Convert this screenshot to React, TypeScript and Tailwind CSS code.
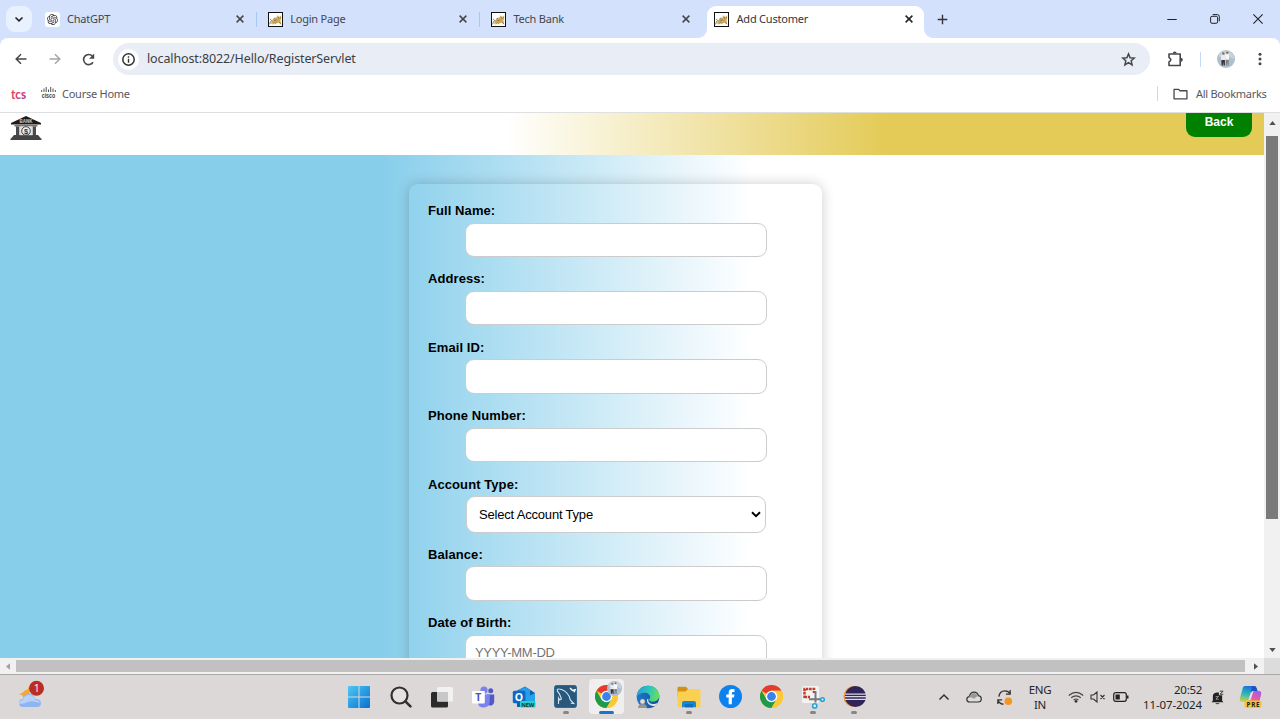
import React from "react";
import { RiOpenaiFill } from "react-icons/ri";

const CloseX = ({ dark = false }: { dark?: boolean }) => (
  <svg viewBox="0 0 10 10" className="h-[10px] w-[10px] shrink-0">
    <path d="M1.6 1.6 8.4 8.4M8.4 1.6 1.6 8.4" stroke={dark ? "#222" : "#45474b"} strokeWidth="1.5" fill="none" />
  </svg>
);

const TomcatIcon = () => (
  <svg viewBox="0 0 15 15" className="h-[15px] w-[15px] shrink-0">
    <rect x=".5" y=".5" width="14" height="14" fill="#fff" stroke="#111" />
    <path d="M3 11.800 3.800 8.600 5.800 6.700l2.400-.5L9.300 3.200l1.200 1.400 1.400.1 1.300-1.500v3.200l-.8 1.800.8 3.700-2-1.400-2.200.7L7 12.600l-.3-1.800-2.300.9Z" fill="#cda956" />
    <path d="M1.700 12.400Q2 9.500 3.600 8.400L1.900 6.800M5 12.300l2-2M11 10.400l2.200 1.800M10 5.800l1 .3M12 5.900l.7-.2M6.500 8.500l2-.6M5.500 6.800l2-.9" stroke="#6b5c45" strokeWidth=".8" fill="none" />
  </svg>
);

const ChatIcon = () => (
  <span className="flex h-[15px] w-[15px] shrink-0 items-center justify-center rounded-[3px] bg-white text-[#333]">
    <RiOpenaiFill size={13} />
  </span>
);

const ArrowIcon = ({ className }: { className: string }) => (
  <svg viewBox="0 0 12 12" className={className}>
    <path d="M11.500 6H1.500M6 1.200 1.200 6 6 10.800" fill="none" stroke="currentColor" strokeWidth="1.500" />
  </svg>
);

const ReloadIcon = () => (
  <svg viewBox="0 0 13 13" className="h-[13px] w-[13px]">
    <path d="M11 9.300A5.100 5.100 0 1 1 10.400 3" fill="none" stroke="currentColor" strokeWidth="1.600" />
    <path d="M12.200.6v5.100H7.100Z" fill="currentColor" />
  </svg>
);

const InfoIcon = () => (
  <svg viewBox="0 0 13 13" className="h-[13px] w-[13px]">
    <circle cx="6.500" cy="6.500" r="5.700" fill="none" stroke="currentColor" strokeWidth="1.500" />
    <path d="M5.800 5.700h1.400v4H5.800ZM5.800 3.200h1.400v1.500H5.800Z" fill="currentColor" />
  </svg>
);

const StarIcon = () => (
  <svg viewBox="0 0 15 15" className="h-[15px] w-[15px]">
    <path d="m7.500 1.900 1.600 3.800 4.200.4-3.100 2.700.9 4.100-3.600-2.200-3.600 2.200.9-4.100L1.700 6.100l4.200-.4Z" fill="none" stroke="currentColor" strokeWidth="1.500" />
  </svg>
);

function Tab({ title, icon, separator = false }: { title: string; icon: React.ReactNode; separator?: boolean }) {
  return (
    <div className="flex h-[38px] w-[223.2px] shrink-0 items-center">
      <div className="flex flex-1 items-center pl-[11px] pr-[11px]">
        {icon}
        <span className="flex-1 pl-[7px] pt-[1px] text-[11px] tracking-[-0.22px] text-[#44474c]">{title}</span>
        <CloseX />
      </div>
      <span className={separator ? "h-[15px] w-[1.5px] bg-[#a8c7fa]" : "h-[15px] w-[1.5px]"} />
    </div>
  );
}

function TabStrip() {
  return (
    <header className="flex h-[38px] shrink-0 bg-[#d3e1fd]">
      <div className="flex w-[34px] shrink-0 items-center pl-[6px]">
        <div className="flex h-[26px] w-[26px] items-center justify-center rounded-[9px] bg-[#eaf1fe]">
          <svg viewBox="0 0 10 7" className="h-[7px] w-[10px]"><path d="m1.5 1.5 3.5 3.3 3.5-3.3" fill="none" stroke="#222" strokeWidth="1.6" /></svg>
        </div>
      </div>
      <Tab title="ChatGPT" icon={<ChatIcon />} separator />
      <Tab title="Login Page" icon={<TomcatIcon />} separator />
      <Tab title="Tech Bank" icon={<TomcatIcon />} />
      <div className="flex w-[222px] shrink-0 items-end">
        <span className="-ml-[6px] h-[9px] w-[9px] shrink-0 bg-white"><span className="block h-full w-full rounded-br-[9px] bg-[#d3e1fd]" /></span>
        <div className="flex h-[32px] w-[217px] shrink-0 items-center rounded-t-[9px] bg-white pl-[7px] pr-[10px] pb-[6px]">
          <TomcatIcon />
          <span className="flex-1 pl-[8px] pt-[1px] text-[11px] tracking-[-0.22px] text-[#33363b]">Add Customer</span>
          <CloseX dark />
        </div>
        <span className="h-[9px] w-[9px] shrink-0 bg-white"><span className="block h-full w-full rounded-bl-[9px] bg-[#d3e1fd]" /></span>
      </div>
      <div className="flex flex-1 items-center justify-between pl-[11px] pr-[1px]">
        <svg viewBox="0 0 11 11" className="h-[11px] w-[11px]"><path d="M5.5.7v9.6M.7 5.5h9.6" stroke="#333" strokeWidth="1.4" /></svg>
        <div className="flex">
          <span className="flex w-[43px] items-center justify-center"><svg viewBox="0 0 10 10" className="h-[10px] w-[10px]"><path d="M.3 5.5h9.400" stroke="#222" /></svg></span>
          <span className="flex w-[43px] items-center justify-center"><svg viewBox="0 0 10 10" className="h-[10px] w-[10px]" fill="none" stroke="#222"><rect x=".6" y="2.3" width="7" height="7" rx="1.4" /><path d="M2.7.6h4.600a2 2 0 0 1 2 2v4.700" /></svg></span>
          <span className="flex w-[43px] items-center justify-center"><svg viewBox="0 0 10 10" className="h-[10px] w-[10px]"><path d="m.4.4 9.2 9.2M9.6.4.4 9.6" stroke="#222" strokeWidth="1.1" /></svg></span>
        </div>
      </div>
    </header>
  );
}

const Avatar = ({ className }: { className: string }) => (
  <svg viewBox="0 0 18 18" className={className}>
    <circle cx="9" cy="9" r="9" fill="#afbfcc" />
    <path d="M2 4Q6 0 12 1q5 3 5 8-4-2-7-3T2 7Z" fill="#c8d4dc" />
    <circle cx="6.3" cy="3.4" r="1.2" fill="#8a6a60" /><circle cx="10.3" cy="2.6" r="1.2" fill="#8a6a60" />
    <path d="M4 5.2h4.4v5H4Z" fill="#f6e8e6" /><path d="M8.2 4.2H12v5.6H8.600Z" fill="#f7fafb" />
    <path d="M4.4 10h3.5v5.5H6.600V12l-.8 3.400H4.600Z" fill="#33333b" /><path d="M9 9.700h2.800l-.2 6-1-.1-.2-3.600-.5 3.500H9Z" fill="#7f8184" />
  </svg>
);

function Toolbar() {
  return (
    <div className="flex h-[42px] shrink-0 items-center rounded-t-[8px] bg-white text-[#45474a]">
      <span className="flex w-[41px] justify-center"><ArrowIcon className="h-[12px] w-[12px]" /></span>
      <span className="flex w-[27px] justify-center text-[#a4a6a9]"><ArrowIcon className="h-[12px] w-[12px] rotate-180" /></span>
      <span className="flex w-[40px] justify-center"><ReloadIcon /></span>
      <div className="ml-[5px] flex h-[32px] w-[1037px] items-center rounded-full bg-[#e9edf6] pl-[5px] pr-[14px]">
        <span className="flex h-[21px] w-[21px] items-center justify-center rounded-full bg-white text-[#303234]"><InfoIcon /></span>
        <span className="flex-1 pl-[8px] pt-[1px] text-[12.5px] tracking-[-0.12px] text-[#3b3e43]">localhost:8022/Hello/RegisterServlet</span>
        <StarIcon />
      </div>
      <span className="flex w-[50px] justify-center">
        <svg viewBox="0 0 17 17" className="h-[17px] w-[17px]">
          <path d="M2 3h11.200v11.500H2V11Q5.600 9 2 6.400Z" fill="none" stroke="#45474a" strokeWidth="1.600" strokeLinejoin="round" />
          <path d="M5.700 2.500a2 2 0 0 1 4 0ZM13.800 6.800a2 2 0 0 1 0 4Z" fill="#45474a" />
        </svg>
      </span>
      <span className="h-[15px] w-px bg-[#c5d9fb]" />
      <span className="flex w-[49px] justify-center"><Avatar className="h-[18px] w-[18px]" /></span>
      <span className="flex w-[19px] justify-center">
        <svg viewBox="0 0 4 14" className="h-[14px] w-[4px]"><circle cx="2" cy="2.300" r="1.500" fill="currentColor" /><circle cx="2" cy="7" r="1.500" fill="currentColor" /><circle cx="2" cy="11.700" r="1.500" fill="currentColor" /></svg>
      </span>
    </div>
  );
}

function Bookmarks() {
  return (
    <div className="flex h-[33px] shrink-0 items-center border-b border-[#dedfe1] bg-white pb-[5px] text-[11px] text-[#55585d]">
      <svg viewBox="0 0 31 15" className="h-[15px] w-[31px] ml-[10px]">
        <defs><linearGradient id="tcs" x1="0" x2="1" y1="0" y2="1"><stop stopColor="#e8553e" /><stop offset=".5" stopColor="#d83a6c" /><stop offset="1" stopColor="#9a3fa8" /></linearGradient></defs>
        <text x="1" y="12.500" fontFamily="Lato" fontWeight="700" fontSize="13" textLength="15" lengthAdjust="spacingAndGlyphs" fill="url(#tcs)">tcs</text>
      </svg>
      <svg viewBox="0 0 15 14" className="h-[14px] w-[15px]">
        <path d="M.7 3v2M3 1.500V5M5.200 0v5M7.500 2.500V5M9.700 0v5M12 1.500V5M14.300 3v2" stroke="#53565a" />
        <text x=".7" y="10.800" textLength="13.600" lengthAdjust="spacingAndGlyphs" fontFamily="Liberation Sans" fontSize="6.500" fontWeight="700" fill="#444">cisco</text>
      </svg>
      <span className="flex-1 pl-[6px] pt-[1px] tracking-[-0.250px]">Course Home</span>
      <span className="h-[15px] w-px bg-[#c5d9fb]" />
      <svg viewBox="0 0 16 13" className="ml-[15px] h-[12px] w-[15px]"><path d="M1 1.500h5L7.500 3H15v8.700H1Z" fill="none" stroke="#45474a" strokeWidth="1.400" strokeLinejoin="round" /></svg>
      <span className="ml-[8px] mr-[13px] w-[71px] whitespace-nowrap pt-[1px] tracking-[-0.270px]">All Bookmarks</span>
    </div>
  );
}

const BankLogo = () => (
  <svg viewBox="0 0 32 25" className="h-[25px] w-[32px]">
    <path d="M16 0 31 7v1.500H1V7Z" fill="#1c1c1c" />
    <path d="M4.500 9.200h23v1.300h-23Z" fill="#555" />
    <path d="M6 10.500h3.500v8.500H6ZM22.500 10.500H26v8.500h-3.500Z" fill="#4b4b4b" />
    <path d="M4 19h24l3 3.500H1ZM.5 22.500h31V24H.500Z" fill="#444" />
    <rect x="9.500" y="10.500" width="13" height="8.700" fill="#e0e0e0" />
    <circle cx="16" cy="15" r="4.300" fill="#eee" stroke="#444" strokeWidth="1" />
    <text x="16" y="17.700" textAnchor="middle" fontSize="7.500" fontWeight="700" fontFamily="Liberation Sans" fill="#333">$</text>
    <text x="16" y="6.700" textAnchor="middle" fontSize="4.500" fontWeight="700" fontFamily="Liberation Sans" fill="#ccc">BANK</text>
  </svg>
);

function Field({ label, placeholder }: { label: string; placeholder?: string }) {
  return (
    <div className="h-[68.400px] shrink-0">
      <label className="block h-[21.700px] text-[13px] font-bold leading-[19px] tracking-[0.080px]">{label}</label>
      <input placeholder={placeholder} className="ml-[37px] block h-[34.400px] w-[302px] rounded-[9px] border border-[#ccc] bg-white px-[9px] text-[13px] tracking-[-0.300px] outline-none placeholder:text-[#757575]" />
    </div>
  );
}

function Page() {
  return (
    <main className="flex h-[545px] shrink-0 font-['Liberation_Sans',sans-serif] text-black">
      <div className="flex h-full w-[1264px] flex-col overflow-hidden">
        <div className="flex h-[42px] shrink-0 items-start justify-between bg-[linear-gradient(to_right,white_40%,#e4cb58_70%)] pl-[10px] pr-[12px]">
          <div className="pt-[3px]"><BankLogo /></div>
          <button className="h-[24px] w-[66px] rounded-b-[9px] bg-[#008000] pb-[5px] text-[12px] font-bold leading-[17px] text-white">Back</button>
        </div>
        <div className="flex flex-1 items-start bg-[linear-gradient(to_right,#87ceeb_30%,white_59.500%)] pl-[409px] pt-[29px]">
          <form className="flex h-[620px] w-[413px] shrink-0 flex-col rounded-[9px] pl-[19px] pt-[17px] shadow-[0_0_13px_rgba(0,0,0,0.2)]">
            <Field label="Full Name:" />
            <Field label="Address:" />
            <Field label="Email ID:" />
            <Field label="Phone Number:" />
            <div className="h-[70.200px] shrink-0">
              <label className="block h-[21.700px] text-[13px] font-bold leading-[19px] tracking-[0.080px]">Account Type:</label>
              <div className="ml-[38px] flex h-[36.500px] w-[300px] items-center justify-between rounded-[9px] border border-[#ccc] bg-white pl-[12px] pr-[4px] text-[13px]">
                <span className="pt-px tracking-[-0.190px]">Select Account Type</span>
                <svg viewBox="0 0 10 7" className="h-[7px] w-[10px]"><path d="m1 1.300 4 3.800 4-3.800" fill="none" stroke="#000" strokeWidth="2" /></svg>
              </div>
            </div>
            <Field label="Balance:" />
            <Field label="Date of Birth:" placeholder="YYYY-MM-DD" />
          </form>
        </div>
      </div>
      <div className="flex w-[16px] flex-col items-center bg-[#f1f1f1]">
        <span className="flex h-[22px] items-center pb-[3px]"><svg viewBox="0 0 8 5" className="h-[4px] w-[7px]"><path d="M4 0 8 5H0Z" fill="#505050" /></svg></span>
        <span className="mt-px h-[383px] w-[12px] bg-[#7a7a7a]" />
        <span className="flex-1" />
        <span className="flex h-[17px] items-center"><svg viewBox="0 0 8 5" className="h-[4px] w-[7px]"><path d="M0 0h8L4 5Z" fill="#505050" /></svg></span>
      </div>
    </main>
  );
}

function HorizontalScroll() {
  return (
    <div className="flex h-[16px] shrink-0 items-center bg-[#f1f1f1]">
      <span className="flex w-[16px] justify-center"><svg viewBox="0 0 5 8" className="h-[7px] w-[4px]"><path d="M5 0v8L0 4Z" fill="#a0a0a0" /></svg></span>
      <span className="h-[12px] w-[1229px] bg-[#c1c1c1]" />
      <span className="flex w-[19px] justify-center pl-[3px]"><svg viewBox="0 0 5 8" className="h-[7px] w-[4px]"><path d="m0 0 5 4-5 4Z" fill="#505050" /></svg></span>
      <span className="h-full flex-1 bg-[#dcdcdc]" />
    </div>
  );
}

const ChromeLogo = ({ className }: { className: string }) => (
  <svg viewBox="0 0 24 24" className={className}>
    <circle cx="12" cy="12" r="12" fill="#fcc934" />
    <path d="M12 12 1.600 6A12 12 0 0 1 22.400 6H12Z" fill="#e33b2e" />
    <path d="M1.600 6A12 12 0 0 0 12 24l5.200-9L12 12 6.800 15Z" fill="#1e9a48" />
    <path d="M12 6h10.400A12 12 0 0 1 12 24l5.200-9Z" fill="#fcc934" />
    <circle cx="12" cy="12" r="6" fill="#fff" /><circle cx="12" cy="12" r="4.600" fill="#3b82ee" />
  </svg>
);

const WindowsLogo = () => (
  <svg viewBox="0 0 22 22" className="h-[22px] w-[22px]">
    <defs><linearGradient id="win" gradientUnits="userSpaceOnUse" x1="0" y1="0" x2="22" y2="22"><stop stopColor="#4cc8f4" /><stop offset="1" stopColor="#0870d0" /></linearGradient></defs>
    <path d="M0 1q0-1 1-1h9.500v10.500H0ZM11.500 0H21q1 0 1 1v9.500H11.500ZM0 11.500h10.500V22H1q-1 0-1-1ZM11.500 11.500H22V21q0 1-1 1h-9.500Z" fill="url(#win)" />
  </svg>
);

const SearchIcon = () => (
  <svg viewBox="0 0 22 22" className="h-[22px] w-[22px]"><circle cx="9.500" cy="9.500" r="8" fill="#e8e5e4" fillOpacity=".7" stroke="#303030" strokeWidth="2.200" /><path d="m15.400 15.400 5 5" stroke="#303030" strokeWidth="2.600" strokeLinecap="round" /></svg>
);

const TaskViewIcon = () => (
  <svg viewBox="0 0 24 22" className="h-[22px] w-[24px]"><rect x="1" y="6" width="17" height="15.500" rx="1.500" fill="#2b2b2b" /><rect x="7" y="1" width="16" height="14.500" rx="1.500" fill="#f2f2f2" /><path d="M7 6h11v9.500H7Z" fill="#c8c8c8" /></svg>
);

const TeamsIcon = () => (
  <svg viewBox="0 0 24 22" className="h-[22px] w-[24px]">
    <circle cx="19.700" cy="4.700" r="2.500" fill="#5058c5" /><circle cx="13" cy="4.200" r="3.600" fill="#7b83eb" />
    <path d="M16 8.500h7.200v6.700q-.3 4.500-4.500 4.400L16 19Z" fill="#5059c9" /><path d="M8 8.500h10.800V15q-.5 6.500-6 6.500T7 17Z" fill="#7b83eb" />
    <rect x="1" y="5" width="12.800" height="12.600" rx="1" fill="#fff" /><text x="7.400" y="15" textAnchor="middle" fontSize="10.500" fontWeight="700" fontFamily="Open Sans" fill="#4b53bc">T</text>
  </svg>
);

const OutlookIcon = () => (
  <svg viewBox="0 0 24 22" className="h-[22px] w-[24px]">
    <path d="M4.500 5 13 .6 23 7v12q0 2-2 2H5Z" fill="#0b5fb5" /><path d="m7 4 6-3.300 5 3v8H8Z" fill="#279de8" /><path d="m13 12 10-5v12q0 2-2 2H8Z" fill="#23a4e5" />
    <rect x=".8" y="4.800" width="12.600" height="12.500" rx="1.500" fill="#0b69c7" /><text x="7" y="15" textAnchor="middle" fontSize="10.500" fontWeight="700" fontFamily="Open Sans" fill="#fff">O</text>
    <rect x="8" y="15" width="15.500" height="6.600" rx="1" fill="#25d0d2" /><text x="15.800" y="20.700" textAnchor="middle" fontSize="5.800" fontWeight="700" fontFamily="Open Sans" textLength="13" fill="#12383b">NEW</text>
  </svg>
);

const WorkbenchIcon = () => (
  <svg viewBox="0 0 23 23" className="h-[23px] w-[23px]">
    <rect x=".5" y=".5" width="22" height="22" rx="2" fill="#28597d" stroke="#34698d" />
    <path d="M4.500 19V13l1.200 2 1.700-1Q5.500 8 3.500 6.500 2.500 3.500 5.300 4q6 .5 10 7.500l1 3.500 3.500 3.500-3-.3" fill="none" stroke="#d5e5ee" strokeWidth="1.100" />
    <path d="m16 3 2.500 2.500 2.500-.7-1 2.400" fill="none" stroke="#fff" strokeWidth="1.500" />
  </svg>
);

const EdgeIcon = () => (
  <svg viewBox="0 0 24 24" className="h-[24px] w-[24px]">
    <defs>
      <linearGradient id="edgeTop" x1="0" x2="1" y1="0" y2=".2"><stop stopColor="#249bd4" /><stop offset=".6" stopColor="#30c6b9" /><stop offset="1" stopColor="#65dc63" /></linearGradient>
      <linearGradient id="edgeLow" x1="0" x2="1"><stop stopColor="#1b78c9" /><stop offset="1" stopColor="#114f99" /></linearGradient>
    </defs>
    <circle cx="12" cy="12" r="11.300" fill="url(#edgeLow)" />
    <path d="M.8 10C2 4 6.500.700 12 .700c7 0 11.300 5 11.300 9.800 0 3.800-2.800 6-6.200 6-2.500 0-4-.8-4-1.800 0-.6 1-1.100 1-2.700 0-2.400-2.300-4.300-5.300-4.300C5.500 7.700 2.200 9 .8 12Z" fill="url(#edgeTop)" />
    <path d="M12.500 13.500c-1 3 1 5.300 4 5.500 2 .1 4-.6 5.200-1.300-.5 1-1.500 2.300-2.700 3.200-5 .2-8.400-2.500-8-6.500Z" fill="#e2e2e2" />
    <circle cx="6.500" cy="16.500" r="2.500" fill="#e0ddda" stroke="#888" strokeWidth=".5" /><path d="M2 23q0-4 4.500-4t4.500 4Z" fill="#959595" />
  </svg>
);

const FolderIcon = () => (
  <svg viewBox="0 0 24 22" className="h-[22px] w-[24px]"><path d="M.5 2Q.5.700 2 .700h7L11 3v8H.500Z" fill="#d19213" /><path d="M.500 5.500h8L11 3h11q1.500 0 1.500 1.500V20q0 1.300-1.500 1.300H2Q.500 21.300.500 20Z" fill="#fbd050" /><path d="M5 21.300V17q0-2 2-2h10q2 0 2 2v4.300Z" fill="#1786d4" /><path d="M8 18h8v3.300H8Z" fill="#0b6fbd" /></svg>
);

const FacebookIcon = () => (
  <svg viewBox="0 0 24 24" className="h-[23px] w-[23px]"><circle cx="12" cy="12" r="12" fill="#0d82ef" /><path d="M10.100 20v-7H7.600V9.800h2.500V8.100q0-3.900 3.700-3.900 1.200 0 2.400.2v2.800h-1.500q-1.300 0-1.300 1.300v1.300h2.700l-.5 3.200h-2.200v7Z" fill="#fff" /></svg>
);

const SnipIcon = () => (
  <svg viewBox="0 0 24 24" className="h-[24px] w-[24px]"><rect x="1" y="1" width="17" height="17" rx="1.500" fill="#f4f3f3" /><path d="M3.500 13V4H13v4M3.500 12H9" fill="none" stroke="#c33b28" strokeWidth="2.500" strokeDasharray="2.600 .8" /><path d="M14.500 6v11.500M8 14.300h12" stroke="#747b80" strokeWidth="2" /><circle cx="21.500" cy="14.500" r="1.800" fill="#e1f3fb" stroke="#26a0d5" strokeWidth="1.500" /><circle cx="13.700" cy="20.900" r="2.100" fill="#e1f3fb" stroke="#26a0d5" strokeWidth="1.500" /></svg>
);

const EclipseIcon = () => (
  <svg viewBox="0 0 24 24" className="h-[23px] w-[23px]"><circle cx="11.500" cy="12" r="11" fill="#ef9645" /><circle cx="13" cy="12" r="11" fill="#302459" /><path d="M2.200 9.500h21.600M2 12.200h22M2.200 14.900h21.600" stroke="#d9d7e5" strokeWidth="1.300" /></svg>
);

const CopilotIcon = () => (
  <svg viewBox="0 0 24 24" className="h-[24px] w-[24px]">
    <defs><linearGradient id="copA" x1=".5" y1="0" x2=".3" y2="1"><stop stopColor="#1b6fdc" /><stop offset=".5" stopColor="#28b8be" /><stop offset="1" stopColor="#d9ce42" /></linearGradient><linearGradient id="copB" x1=".7" y1="0" x2=".3" y2="1"><stop stopColor="#a35de8" /><stop offset=".5" stopColor="#ed5c9b" /><stop offset="1" stopColor="#f59b50" /></linearGradient></defs>
    <path d="M6 1h9q2 0 2.500 2l1 3h-5q-1.500 0-2 2l-2 7q-.5 2-2.500 2H3q-3 0-2-4L3.500 4Q4 1 6 1Z" fill="url(#copA)" />
    <path d="M15 6h5q3 0 2 4l-2 8q-.6 3-3 3H9q-2 0-2.500-2L6 17h2q1.500 0 2-2l2-7q.7-2 3-2Z" fill="url(#copB)" />
    <path d="M13 1h2q2 0 2.500 2l1 3h-5l-1.700 2Z" fill="#214fc7" />
    <path d="M12 8q.7-2 2.500-2L11.500 15H9.700Z" fill="#e8e4ee" />
    <rect x="5.500" y="15.500" width="17" height="7.500" rx="2.500" fill="#f5c529" /><text x="14" y="21.600" textAnchor="middle" fontSize="6.200" fontWeight="700" fontFamily="Open Sans" textLength="13" fill="#222">PRE</text>
  </svg>
);

function AppCell({ children, dot = false }: { children: React.ReactNode; dot?: boolean }) {
  return (
    <div className="flex h-full w-[41.250px] shrink-0 flex-col items-center pt-[4px]">
      <div className="flex h-[35px] items-center justify-center">{children}</div>
      <span className={dot ? "-mt-[3px] h-[3px] w-[6px] rounded-full bg-[#858585]" : "hidden"} />
    </div>
  );
}

function Taskbar() {
  return (
    <footer className="flex h-[45px] shrink-0 border-t border-[#aaa8a8] bg-[#dcd8d7]">
      <div className="w-[338.800px] shrink-0 pl-[18px] pt-[5px]">
        <svg viewBox="0 0 28 28" className="h-[28px] w-[28px]">
          <path d="M11.500 4.500v13H5Q5 14 .5 14.500 5 13 7 10.500l3-1.500Z" fill="#f2aa2e" />
          <path d="M5 27q-4 0-4-4t4-4q1-5 6-5t6 5q6 0 6 4t-4 4Z" fill="#8fb5f1" /><path d="M5 20q1-5 6-5t6 5q4 0 5 3-8-3-12-1T1 24q0-4 4-4Z" fill="#b7d1fa" />
          <circle cx="18.500" cy="8.200" r="7.500" fill="#bd2b25" /><text x="18.700" y="12" textAnchor="middle" fontSize="10.500" fontFamily="Open Sans" fill="#fff">1</text>
        </svg>
      </div>
      <AppCell><WindowsLogo /></AppCell>
      <AppCell><SearchIcon /></AppCell>
      <AppCell><TaskViewIcon /></AppCell>
      <AppCell><TeamsIcon /></AppCell>
      <AppCell><OutlookIcon /></AppCell>
      <AppCell dot><WorkbenchIcon /></AppCell>
      <div className="flex w-[41.250px] shrink-0 justify-center pt-[4px]">
        <div className="relative flex h-[35px] w-[35px] flex-col items-center rounded-[4px] bg-[#f0eeee] pt-[6px]">
          <ChromeLogo className="h-[23px] w-[23px]" />
          <Avatar className="absolute left-[18px] top-[2px] h-[15px] w-[15px]" />
          <span className="mt-[3px] h-[3px] w-[15px] shrink-0 rounded-full bg-[#1676c8]" />
        </div>
      </div>
      <AppCell><EdgeIcon /></AppCell>
      <AppCell dot><FolderIcon /></AppCell>
      <AppCell><FacebookIcon /></AppCell>
      <AppCell><ChromeLogo className="h-[23px] w-[23px]" /></AppCell>
      <AppCell dot><SnipIcon /></AppCell>
      <AppCell dot><EclipseIcon /></AppCell>
      <div className="flex flex-1 items-center justify-end pr-[10px] text-[11.500px] leading-[15px] text-[#252525]">
        <span className="flex w-[30px] justify-center"><svg viewBox="0 0 12 8" className="h-[8px] w-[12px]"><path d="m1.500 6.500 4.500-4.500 4.500 4.500" stroke="#333" strokeWidth="1.500" fill="none" /></svg></span>
        <span className="flex w-[30px] justify-center"><svg viewBox="0 0 16 12" className="h-[12px] w-[16px]"><path d="M3.500 11Q.800 11 .800 8.300q0-2.200 2.500-2.600Q4.500 1.200 8 1.200t4.400 3.400Q15.300 5 15.300 8T12 11Z" fill="#deddde" stroke="#333" strokeWidth="1.200" /><path d="M2 6.800 4 5q1.500-3 4-3t3.700 3L8 7.700 5 6.200Z" fill="#999" /></svg></span>
        <span className="flex w-[32px] justify-center pr-[2px]"><svg viewBox="0 0 18 18" className="h-[17px] w-[17px]"><path d="M3 8Q4 2 9.500 2q3.500 0 5.500 3M15 1v4.500h-4.500M2 16v-4.500h4.500M2 12q2 4 6 4" stroke="#333" strokeWidth="1.400" fill="none" /><circle cx="13" cy="13" r="4" fill="#f19523" /></svg></span>
        <span className="mr-[6px] flex w-[38px] flex-col items-center tracking-[-0.300px]"><span>ENG</span><span>IN</span></span>
        <span className="flex w-[22px] justify-center"><svg viewBox="0 0 16 12" className="h-[12px] w-[16px]"><path d="M.8 4.500Q8-1.800 15.200 4.500M3.200 6.800Q8 2.800 12.800 6.800M5.600 9Q8 7 10.400 9" stroke="#444" strokeWidth="1.200" fill="none" /><circle cx="8" cy="10.300" r="1.400" fill="#333" /></svg></span>
        <span className="flex w-[22px] justify-center"><svg viewBox="0 0 16 12" className="h-[12px] w-[16px]"><path d="M1 4h2.500L7 1v10L3.500 8H1ZM10.500 4l4 4M14.500 4l-4 4" stroke="#333" strokeWidth="1.100" fill="none" /></svg></span>
        <span className="flex w-[24px] justify-center"><svg viewBox="0 0 16 10" className="h-[10px] w-[16px]"><rect x=".7" y=".7" width="12.600" height="8.600" rx="2" fill="none" stroke="#222" strokeWidth="1.200" /><path d="M2.500 2.500h4.300v5H2.500ZM14 3.500h1.500v3H14Z" fill="#222" /></svg></span>
        <span className="flex w-[69px] flex-col items-end whitespace-nowrap tracking-[-0.100px]"><span className="tracking-[-0.300px]">20:52</span><span>11-07-2024</span></span>
        <span className="flex w-[30px] justify-center">
          <svg viewBox="0 0 14 16" className="h-[15px] w-[13px]">
            <path d="M2 11.500V6.500Q2 3 6 2.500h2.500v3h3.500v6l1.500 1.500H.500Z" fill="#222" />
            <path d="M4.500 14.300q2.500 2 5 0Z" fill="#222" />
            <path d="M9.500 1.200H13L9.800 4.500h3.400" stroke="#333" fill="none" />
            <path d="M5 7h3L5.300 9.800h3" stroke="#bbb" strokeWidth=".8" fill="none" />
          </svg>
        </span>
        <span className="flex w-[38px] justify-center"><CopilotIcon /></span>
      </div>
    </footer>
  );
}

export default function App() {
  return (
    <div className="flex h-[719px] w-[1280px] flex-col overflow-hidden bg-[#d3e1fd] font-['Noto_Sans',sans-serif]">
      <TabStrip />
      <Toolbar />
      <Bookmarks />
      <Page />
      <HorizontalScroll />
      <Taskbar />
    </div>
  );
}
